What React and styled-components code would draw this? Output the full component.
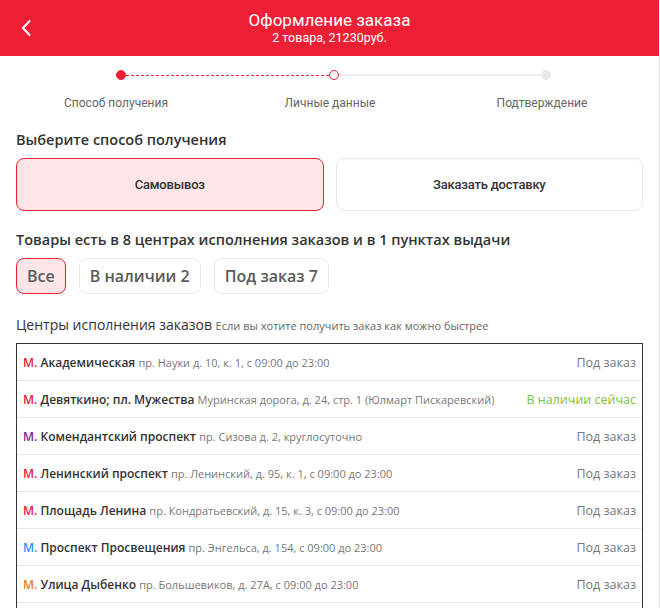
import React from "react";
import styled, { createGlobalStyle } from "styled-components";

const GlobalStyle = createGlobalStyle`
  * {
    margin: 0;
    padding: 0;
    box-sizing: border-box;
  }
  body {
    background: #ffffff;
    font-family: "Open Sans", "Noto Sans", sans-serif;
    color: #333333;
    overflow: hidden;
  }
`;

const stores = [
  { line: "#e8203a", name: "Академическая", addr: "пр. Науки д. 10, к. 1, с 09:00 до 23:00", now: false },
  { line: "#e8203a", name: "Девяткино; пл. Мужества", addr: "Муринская дорога, д. 24, стр. 1 (Юлмарт Пискаревский)", now: true },
  { line: "#8b1a8c", name: "Комендантский проспект", addr: "пр. Сизова д. 2, круглосуточно", now: false },
  { line: "#e8203a", name: "Ленинский проспект", addr: "пр. Ленинский, д. 95, к. 1, с 09:00 до 23:00", now: false },
  { line: "#e8203a", name: "Площадь Ленина", addr: "пр. Кондратьевский, д. 15, к. 3, с 09:00 до 23:00", now: false },
  { line: "#1e94f0", name: "Проспект Просвещения", addr: "пр. Энгельса, д. 154, с 09:00 до 23:00", now: false },
  { line: "#ef7a1a", name: "Улица Дыбенко", addr: "пр. Большевиков, д. 27А, с 09:00 до 23:00", now: false },
];

const Checkout = () => (
  <>
    <GlobalStyle />
    <Page>
      <Header>
        <BackButton aria-label="Назад">
          <svg width="12" height="18" viewBox="0 0 12 18">
            <path d="M10 1.5 L3 9 L10 16.5" fill="none" stroke="#fff" strokeWidth="2" />
          </svg>
        </BackButton>
        <HeaderTitle>Оформление заказа</HeaderTitle>
        <HeaderSub>2 товара, 21230руб.</HeaderSub>
      </Header>
      <Body>
        <Track>
          <Dot $kind="done" />
          <Segment $dashed />
          <Dot $kind="current" />
          <Segment />
          <Dot $kind="todo" />
        </Track>
        <StepLabels>
          <StepLabel>Способ получения</StepLabel>
          <StepLabel>Личные данные</StepLabel>
          <StepLabel>Подтверждение</StepLabel>
        </StepLabels>

        <SectionTitle>Выберите способ получения</SectionTitle>
        <Methods>
          <Method $active>Самовывоз</Method>
          <Method>Заказать доставку</Method>
        </Methods>

        <SectionTitle $gap={19}>Товары есть в 8 центрах исполнения заказов и в 1 пунктах выдачи</SectionTitle>
        <Chips>
          <Chip $active>Все</Chip>
          <Chip>В наличии 2</Chip>
          <Chip>Под заказ 7</Chip>
        </Chips>

        <ListTitle>
          Центры исполнения заказов <ListHint>Если вы хотите получить заказ как можно быстрее</ListHint>
        </ListTitle>
        <StoreList>
          {stores.map((s) => (
            <StoreRow key={s.name}>
              <StoreInfo>
                <Metro $color={s.line}>М.</Metro> <StoreName>{s.name}</StoreName>{" "}
                <StoreAddr>{s.addr}</StoreAddr>
              </StoreInfo>
              <Status $now={s.now}>{s.now ? "В наличии сейчас" : "Под заказ"}</Status>
            </StoreRow>
          ))}
        </StoreList>
      </Body>
    </Page>
  </>
);

const Page = styled.div`
  width: 660px;
  height: 608px;
  display: flex;
  flex-direction: column;
`;

const Header = styled.header`
  position: relative;
  width: 659px;
  height: 56px;
  flex-shrink: 0;
  background: #ee1f35;
  color: #fff;
  display: flex;
  flex-direction: column;
  align-items: center;
  padding-top: 10px;
  font-family: Roboto, "Liberation Sans", sans-serif;
`;

const BackButton = styled.button`
  position: absolute;
  left: 20px;
  top: 19px;
  background: none;
  border: 0;
  display: flex;
`;

const HeaderTitle = styled.h1`
  font-size: 17px;
  font-weight: 400;
  line-height: 20px;
`;

const HeaderSub = styled.div`
  font-size: 12.5px;
  line-height: 16px;
`;

const Body = styled.main`
  width: 660px;
  flex: 1;
  min-height: 0;
  border-right: 1px solid #e2e2e2;
  padding: 0 16px;
  display: flex;
  flex-direction: column;
  overflow: hidden;
`;

const Track = styled.div`
  display: flex;
  align-items: center;
  margin: 14px 0 0 100px;
  width: 435px;
`;

const dotStyles = {
  done: "background: #ee1f35; border: 1px solid #ee1f35;",
  current: "background: #fff; border: 1px solid #ee1f35;",
  todo: "background: #e8e8e8; border: 1px solid #e8e8e8;",
};

const Dot = styled.span`
  width: 10px;
  height: 10px;
  border-radius: 50%;
  flex-shrink: 0;
  ${(p) => dotStyles[p.$kind]}
`;

const Segment = styled.span`
  flex: 1;
  height: 0;
  border-top: ${(p) => (p.$dashed ? "1px dashed #ee1f35" : "2px solid #ededed")};
`;

const StepLabels = styled.div`
  display: grid;
  grid-template-columns: 200px 228px 196px;
  margin-top: 15px;
  font-family: Roboto, "Liberation Sans", sans-serif;
`;

const StepLabel = styled.span`
  text-align: center;
  font-size: 12px;
  line-height: 16px;
  color: #666;
`;

const SectionTitle = styled.h2`
  margin-top: ${(p) => p.$gap || 19}px;
  font-size: 14.5px;
  font-weight: 600;
  line-height: 20px;
  color: #333;
`;

const Methods = styled.div`
  display: grid;
  grid-template-columns: 1fr 1fr;
  gap: 12px;
  margin-top: 8px;
`;

const Method = styled.button`
  height: 53px;
  border-radius: 8px;
  border: 1px solid ${(p) => (p.$active ? "#ee1f35" : "#e6e6e6")};
  background: ${(p) => (p.$active ? "#fde5e8" : "#fff")};
  font-family: Roboto, "Open Sans", sans-serif;
  font-size: 13px;
  font-weight: 500;
  letter-spacing: -0.2px;
  color: #333;
`;

const Chips = styled.div`
  display: flex;
  gap: 13px;
  margin-top: 8px;
`;

const Chip = styled.button`
  height: 36px;
  padding: 0 10px;
  border-radius: 8px;
  border: 1px solid ${(p) => (p.$active ? "#ee1f35" : "#e8e8e8")};
  background: ${(p) => (p.$active ? "#fde5e8" : "#fff")};
  font-family: "Open Sans", sans-serif;
  font-size: 16px;
  font-weight: 600;
  color: #5a5a5a;
`;

const ListTitle = styled.div`
  margin-top: 21px;
  font-size: 14px;
  line-height: 20px;
  color: #333;
`;

const ListHint = styled.span`
  font-size: 11px;
  color: #666;
`;

const StoreList = styled.ul`
  list-style: none;
  flex: 1;
  margin-top: 7px;
  border: 1px solid #333;
  border-bottom: 0;
`;

const StoreRow = styled.li`
  height: 37px;
  display: flex;
  align-items: center;
  justify-content: space-between;
  padding: 0 6px;
  border-bottom: 1px solid #e8e8e8;
`;

const StoreInfo = styled.div`
  white-space: nowrap;
  overflow: hidden;
  font-size: 12px;
`;

const Metro = styled.span`
  color: ${(p) => p.$color};
  font-weight: 600;
`;

const StoreName = styled.span`
  font-weight: 600;
  color: #333;
`;

const StoreAddr = styled.span`
  font-size: 11px;
  color: #777;
`;

const Status = styled.span`
  flex-shrink: 0;
  font-size: 12.5px;
  color: ${(p) => (p.$now ? "#7dc242" : "#777")};
`;

export default Checkout;
